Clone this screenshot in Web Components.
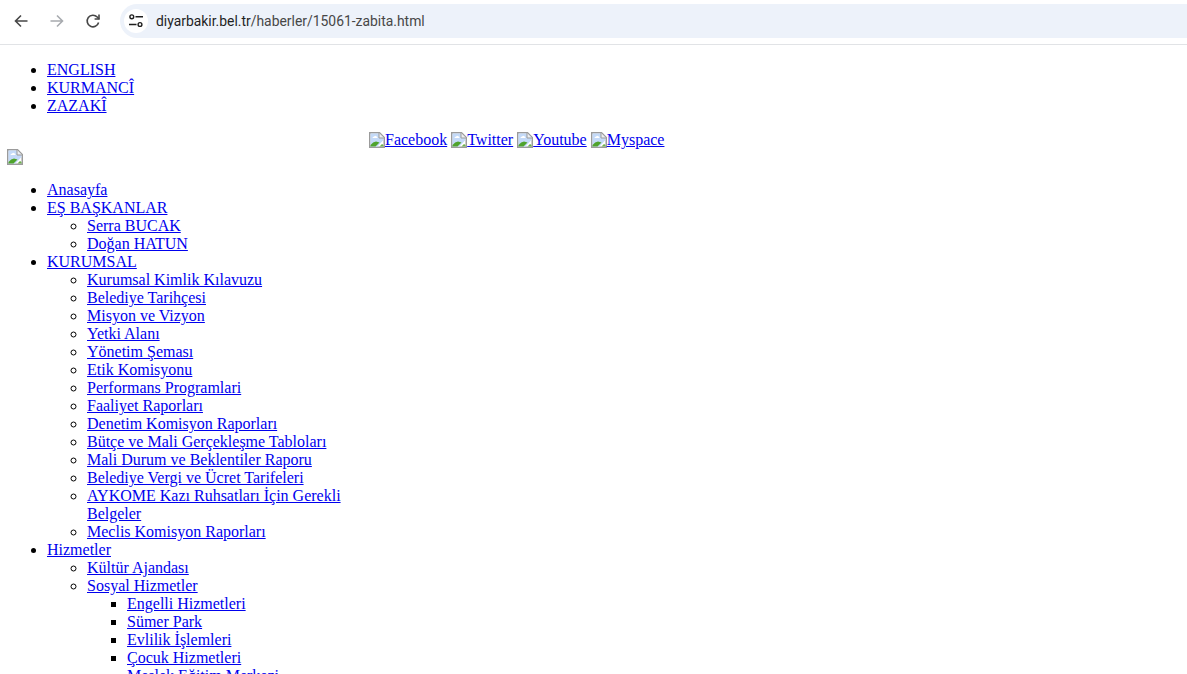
<!DOCTYPE html>
<html lang="tr">
<head>
<meta charset="utf-8">
<title>Zabıta</title>
<style>
html, body { margin: 0; height: 100%; overflow: hidden; background: #fff; }
</style>
</head>
<body>
<browser-bar url-host="diyarbakir.bel.tr" url-path="/haberler/15061-zabita.html"></browser-bar>
<old-page>
  <ul>
    <li><a href="#">ENGLISH</a></li>
    <li><a href="#">KURMANCÎ</a></li>
    <li><a href="#">ZAZAKÎ</a></li>
  </ul>
</old-page>
<script>
customElements.define('browser-bar', class extends HTMLElement {
  constructor() {
    super();
    let shadowRoot = this.attachShadow({mode: 'open'});
    shadowRoot.innerHTML = `
    <style>
    :host {
      display: flex;
      align-items: flex-start;
      padding-top: 4px;
      box-sizing: border-box;
      height: 45px;
      border-bottom: 1px solid #e1e3e6;
      background: #fff;
      font: 13.9px Roboto, "Liberation Sans", sans-serif;
    }
    .btn { width: 36px; height: 34px; display: flex; align-items: center; justify-content: center; flex: none; }
    .btn.first { margin-left: 3px; }
    svg { display: block; }
    .omni {
      flex: 1;
      height: 34px;
      margin: 0 0 0 9px;
      display: flex;
      align-items: center;
      background: #edf2fa;
      border-radius: 17px 0 0 17px;
    }
    .tune {
      width: 24px; height: 24px; margin-left: 4px; border-radius: 50%;
      background: #fff; display: flex; align-items: center; justify-content: center;
    }
    .url { margin-left: 8px; color: #474747; }
    .host { color: #1f1f1f; }
    </style>
    <div class="btn first"><svg width="16" height="16" viewBox="0 0 16 16" fill="none" stroke="#474747" stroke-width="1.6"><path d="M14.5 8H2.5M8 2.5 2.5 8 8 13.5"/></svg></div>
    <div class="btn"><svg width="16" height="16" viewBox="0 0 16 16" fill="none" stroke="#a8abaf" stroke-width="1.6"><path d="M1.5 8h12M8 2.5 13.5 8 8 13.5"/></svg></div>
    <div class="btn"><svg width="16" height="16" viewBox="0 0 16 16" fill="none" stroke="#474747" stroke-width="1.6"><path d="M13.6 9.5A5.8 5.8 0 1 1 12.2 4L14 6"/><path d="M14 1.6V6H9.6" /></svg></div>
    <div class="omni">
      <div class="tune"><svg width="16" height="16" viewBox="0 0 16 16" fill="none" stroke="#1f1f1f" stroke-width="1.4"><circle cx="3.8" cy="3.8" r="1.9"/><path d="M7.5 3.8H15M1 11.5h7.5"/><circle cx="12" cy="11.5" r="1.9"/></svg></div>
      <div class="url"></div>
    </div>
    `;
    let url = shadowRoot.querySelector('.url');
    let host = document.createElement('span');
    host.className = 'host';
    host.textContent = this.getAttribute('url-host');
    url.append(host, this.getAttribute('url-path'));
  }
});

// nested list data for the unstyled page
const NAV = [
  ['Anasayfa'],
  ['EŞ BAŞKANLAR', [['Serra BUCAK'], ['Doğan HATUN']]],
  ['KURUMSAL', [
    ['Kurumsal Kimlik Kılavuzu'], ['Belediye Tarihçesi'], ['Misyon ve Vizyon'], ['Yetki Alanı'],
    ['Yönetim Şeması'], ['Etik Komisyonu'], ['Performans Programlari'], ['Faaliyet Raporları'],
    ['Denetim Komisyon Raporları'], ['Bütçe ve Mali Gerçekleşme Tabloları'],
    ['Mali Durum ve Beklentiler Raporu'], ['Belediye Vergi ve Ücret Tarifeleri'],
    ['AYKOME Kazı Ruhsatları İçin Gerekli Belgeler'], ['Meclis Komisyon Raporları']
  ]],
  ['Hizmetler', [
    ['Kültür Ajandası'],
    ['Sosyal Hizmetler', [
      ['Engelli Hizmetleri'], ['Sümer Park'], ['Evlilik İşlemleri'], ['Çocuk Hizmetleri'], ['Meslek Eğitim Merkezi']
    ]]
  ]]
];

const renderList = items => '<ul>' + items.map(([label, kids]) =>
  `<li><a href="#">${label}</a>${kids ? renderList(kids) : ''}</li>`).join('') + '</ul>';

customElements.define('old-page', class extends HTMLElement {
  constructor() {
    super();
    let shadowRoot = this.attachShadow({mode: 'open'});
    shadowRoot.innerHTML = `
    <style>
    :host {
      display: block;
      padding: 8px 7px;
      font: 16px/18px "Liberation Serif", "Times New Roman", serif;
      color: #000;
    }
    a { color: #00e; }
    ::slotted(ul) { margin: 8px 0 16px; padding-left: 40px; line-height: 18px; }
    .head { display: flex; align-items: flex-end; height: 34px; }
    .logo { flex: none; width: 16px; height: 16px; }
    .social { margin: 0 0 16px 346px; white-space: nowrap; }
    .nav { width: 341px; }
    ul { margin: 16px 0; padding-left: 40px; }
    ul ul { margin: 0; }
    </style>
    <slot></slot>
    <div class="head">
      <broken-pic class="logo"></broken-pic>
      <div class="social">
        <a href="#"><broken-pic></broken-pic>Facebook</a>
        <a href="#"><broken-pic></broken-pic>Twitter</a>
        <a href="#"><broken-pic></broken-pic>Youtube</a>
        <a href="#"><broken-pic></broken-pic>Myspace</a>
      </div>
    </div>
    <div class="nav">${renderList(NAV)}</div>
    `;
  }
});

customElements.define('broken-pic', class extends HTMLElement {
  constructor() {
    super();
    let shadowRoot = this.attachShadow({mode: 'open'});
    shadowRoot.innerHTML = `
    <style>
    :host { display: inline-block; width: 16px; height: 16px; vertical-align: -3px; }
    svg { display: block; }
    </style>
    <svg width="16" height="16" viewBox="0 0 16 16">
      <path d="M.75 .75H10.5L15.25 5.5V15.25H.75Z" fill="#fff" stroke="#9b9b9b" stroke-width="1.5"/>
      <path d="M1.5 1.5H10V6H14.5V8L8.5 14.5H1.5Z" fill="#c4daf8"/>
      <path d="M3.5 6Q3.5 4.4 5.2 4.4 6 3.4 7.2 4.2 8.6 4.4 8.6 6Z" fill="#fff"/>
      <path d="M1.5 14.5V13Q4 10 7 9.6L10.5 10.5 6.5 14.5Z" fill="#4fa32c"/>
      <path d="M10.5 14.5 13 12 14.5 13V14.5Z" fill="#6fb04e"/>
      <path d="M10 1V6H15" fill="#eceff3" stroke="#9b9b9b"/>
    </svg>
    `;
  }
});
</script>
</body>
</html>
